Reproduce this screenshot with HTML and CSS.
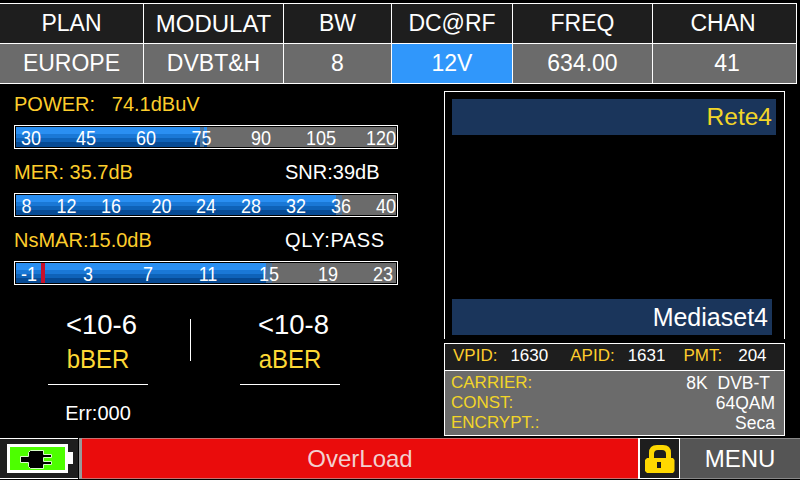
FILE: index.html
```html
<!DOCTYPE html>
<html lang="en">
<head>
<meta charset="utf-8">
<title>Signal meter</title>
<link rel="stylesheet" href="styles.css">
</head>
<body>
<div class="screen">
  <div class="table">
    <div class="cell head">PLAN</div><div class="cell head modulat">MODULAT</div><div class="cell head">BW</div><div class="cell head">DC@RF</div><div class="cell head">FREQ</div><div class="cell head chan-head">CHAN</div>
    <div class="cell val">EUROPE</div><div class="cell val">DVBT&amp;H</div><div class="cell val">8</div><div class="cell val active">12V</div><div class="cell val">634.00</div><div class="cell val chan">41</div>
  </div>
  <div class="main">
    <div class="left">
      <div class="readout"><span class="y">POWER:&nbsp;&nbsp; 74.1dBuV</span></div>
      <div class="bar">
        <div class="fill" style="width:191px"></div>
        <div class="edge" style="left:185px;width:4px"></div>
        <span class="tick" style="left:16px">30</span><span class="tick" style="left:71px">45</span><span class="tick" style="left:131px">60</span><span class="tick" style="left:186.5px">75</span><span class="tick" style="left:246px">90</span><span class="tick" style="left:306px">105</span><span class="tick" style="left:366px">120</span>
      </div>
      <div class="readout"><span class="y">MER: 35.7dB</span><span class="w">SNR:39dB</span></div>
      <div class="bar">
        <div class="fill" style="width:320px"></div>
        <div class="edge" style="left:321px;width:6px"></div>
        <span class="tick" style="left:11.5px">8</span><span class="tick" style="left:51.5px">12</span><span class="tick" style="left:96px">16</span><span class="tick" style="left:146.5px">20</span><span class="tick" style="left:191px">24</span><span class="tick" style="left:236px">28</span><span class="tick" style="left:281px">32</span><span class="tick" style="left:326px">36</span><span class="tick" style="left:371px">40</span>
      </div>
      <div class="readout"><span class="y">NsMAR:15.0dB</span><span class="w wide">QLY:PASS</span></div>
      <div class="bar">
        <div class="fill" style="width:250px"></div>
        <div class="edge" style="left:251px;width:6px"></div>
        <div class="marker"></div>
        <span class="tick" style="left:14px">-1</span><span class="tick" style="left:73px">3</span><span class="tick" style="left:133px">7</span><span class="tick" style="left:193px">11</span><span class="tick" style="left:254px">15</span><span class="tick" style="left:313px">19</span><span class="tick" style="left:368px">23</span>
      </div>
      <div class="ber">
        <div class="ber-col">
          <div class="ber-val">&lt;10-6</div>
          <div class="ber-name">bBER</div>
          <div class="rule"></div>
          <div class="err">Err:000</div>
        </div>
        <div class="vline"></div>
        <div class="ber-col">
          <div class="ber-val">&lt;10-8</div>
          <div class="ber-name">aBER</div>
          <div class="rule"></div>
        </div>
      </div>
    </div>
    <div class="right">
      <div class="video">
        <div class="band yellow">Rete4</div>
        <div class="band white">Mediaset4</div>
      </div>
      <div class="pids">
        <span class="y">VPID:</span><span class="pv1">1630</span><span class="y">APID:</span><span class="pv2">1631</span><span class="y">PMT:</span><span class="pv3">204</span>
      </div>
      <div class="info">
        <div class="info-row"><span class="y">CARRIER:</span><span class="dvb">8K&nbsp; DVB-T</span></div>
        <div class="info-row"><span class="y">CONST:</span><span>64QAM</span></div>
        <div class="info-row"><span class="y">ENCRYPT.:</span><span>Seca</span></div>
      </div>
    </div>
  </div>
  <div class="footer">
    <div class="batt-box">
      <svg width="66" height="29" viewBox="0 0 66 29" aria-hidden="true">
        <rect x="0" y="0" width="61" height="29" fill="#fff"/>
        <rect x="3" y="3" width="55" height="23" fill="#4dff00"/>
        <rect x="61" y="8" width="5" height="12" fill="#fff"/>
        <path d="M13.500 12.500h8v-4l2-2h13v4h8v3h-8v4h8v3h-8v4h-13l-2-2v-4h-8z" fill="#000" stroke="#d8ffc8" stroke-width="1"/>
      </svg>
    </div>
    <div class="alert">OverLoad</div>
    <div class="lock-box">
      <svg width="30" height="28" viewBox="0 0 30 28" aria-hidden="true">
        <path d="M4 14V8Q4 0 12 0h6q8 0 8 8v6h-5V9q0-4-4-4h-4q-4 0-4 4v5z" fill="#ffd800"/>
        <path d="M2 13h26l1.500 2v11l-1.500 2H2L0 26V15z" fill="#ffd800"/>
        <rect x="12" y="17" width="4" height="6" fill="#1a1a1a"/>
      </svg>
    </div>
    <div class="menu">MENU</div>
  </div>
</div>
</body>
</html>
```

FILE: styles.css
```css
* { box-sizing: border-box; }
html, body { margin: 0; padding: 0; background: #000; }
body { width: 800px; height: 480px; overflow: hidden; font-family: "Liberation Sans", Arial, sans-serif; color: #fff; }
.screen { width: 800px; height: 480px; padding-top: 3px; display: flex; flex-direction: column; background: #000; }

.table { width: 797px; display: grid; grid-template-columns: 144px 140px 108px 121px 140px 144px; grid-template-rows: 40px 40px; border-top: 1px solid #fff; }
.cell { display: flex; align-items: center; justify-content: center; font-size: 23px; border-right: 1px solid #fff; border-bottom: 1px solid #fff; }
.head { background: #1e1e1e; }
.modulat { font-size: 24px; }
.chan-head { padding-right: 3px; }
.val { background: #6b6b6b; }
.val.active { background: #3097fb; }
.val.chan { padding-left: 5px; }

.main { flex: 1; display: flex; min-height: 0; }
.left { width: 444px; padding: 8px 0 0 14px; display: flex; flex-direction: column; }
.readout { width: 371px; height: 25px; font-size: 20px; display: flex; justify-content: space-between; align-items: center; white-space: nowrap; }
.readout + .bar { margin-top: 8px; }
.bar + .readout { margin-top: 11px; }
.y { color: #fdcd2c; }
.w { color: #fff; width: 100px; }
.wide { letter-spacing: .6px; }

.bar { position: relative; width: 384px; height: 24px; border: 1px solid #fff; background: #6b6b6b; box-shadow: inset 0 0 0 1px #000; flex: none; }
.fill { position: absolute; left: 1px; top: 1px; bottom: 1px; background: linear-gradient(#2a8ff2 0, #2a8ff2 35%, #1a78d6 35%, #1a78d6 55%, #0e62b8 55%, #0e62b8 75%, #064a94 75%); }
.edge { position: absolute; top: 1px; bottom: 1px; background: #4f7397; }
.tick { position: absolute; top: 1px; line-height: 22px; font-size: 18px; transform: translateX(-50%) scaleY(1.1); }
.marker { position: absolute; left: 26px; top: 1px; bottom: 1px; width: 4px; background: #c8102a; }

.ber { display: flex; margin-top: 26px; width: 372px; }
.ber-col { width: 100px; display: flex; flex-direction: column; align-items: center; }
.ber-col:first-child { margin-left: 34px; }
.ber-col:last-child { margin-left: 49px; }
.ber-val { font-size: 27.5px; line-height: 28px; padding-left: 7px; white-space: nowrap; }
.ber-name { font-size: 24px; line-height: 40px; color: #fdd835; transform: scaleY(1.08); }
.rule { width: 100px; height: 1px; background: #fff; margin-top: 5px; }
.err { font-size: 20px; margin-top: 16px; line-height: 24px; }
.vline { width: 1px; height: 42px; background: #fff; margin: 8px 0 0 42px; }

.right { width: 341px; padding-top: 7px; display: flex; flex-direction: column; }
.video { height: 248px; border: 1px solid #fff; border-bottom: 0; padding: 7px 8px 4px 7px; display: flex; flex-direction: column; justify-content: space-between; }
.band { height: 36px; background: #1a355b; display: flex; align-items: center; justify-content: flex-end; font-size: 24.5px; padding-right: 4px; }
.band.yellow { color: #f2d528; }
.band.white { font-size: 25px; margin-right: 4px; }
.pids { height: 28px; margin-top: 4px; background: #1e1e1e; border: 1px solid #fff; font-size: 17px; display: flex; align-items: center; padding: 0 0 3px 8px; }
.pv1 { margin: 0 22px 0 13px; }
.pv2 { margin: 0 18px 0 13px; }
.pv3 { margin-left: 16px; }
.info { height: 65px; background: #6b6b6b; border: 1px solid #fff; border-top: 0; font-size: 17.5px; line-height: 20px; padding: 2px 9px 0 6px; }
.info .y { color: #f2d528; font-size: 17px; }
.info-row { display: flex; justify-content: space-between; }
.dvb { margin-right: 5px; }

.footer { height: 42px; display: flex; padding-bottom: 1px; }
.batt-box { width: 78px; background: #1e1e1e; border-top: 1px solid #fff; border-bottom: 1px solid #fff; display: flex; align-items: center; padding-left: 7px; }
.alert { flex: 1; margin-left: 4px; background: #ea0c0c; border-top: 1px solid #c87070; border-bottom: 1px solid #c87070; color: #f2d0d0; font-size: 24px; display: flex; align-items: center; justify-content: center; box-shadow: -3px 0 0 #999; }
.lock-box { width: 42px; background: #1e1e1e; border: 1px solid #fff; border-width: 1px 1px 1px 2px; display: flex; align-items: center; justify-content: center; }
.menu { width: 120px; background: #555; border-top: 1px solid #888; border-bottom: 1px solid #888; font-size: 24px; display: flex; align-items: center; justify-content: center; }
```
